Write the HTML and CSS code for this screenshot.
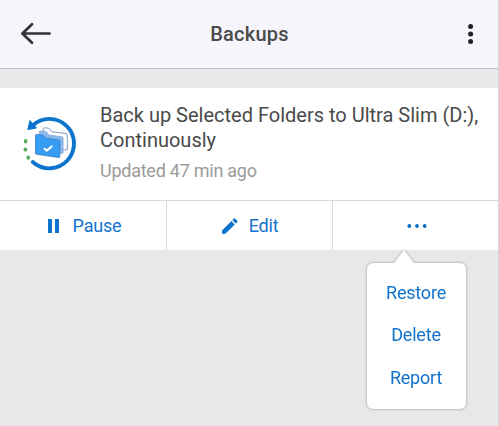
FILE: index.html
```html
<!DOCTYPE html>
<html lang="en">
<head>
  <meta charset="UTF-8" />
  <meta name="viewport" content="width=device-width, initial-scale=1.0" />
  <title>Backups</title>
  <link rel="stylesheet" href="styles.css">
</head>
<body>
  <div class="app">
    <header class="header">
      <button class="icon-btn" aria-label="Back">
        <svg width="32" height="24" viewBox="0 0 32 24" fill="none" stroke="#343236" stroke-width="2.7" stroke-linecap="round" stroke-linejoin="round">
          <path d="M29.5 11.5H2.5M12 2.3L2.4 11.5l9.6 9.2" />
        </svg>
      </button>
      <h1 class="title">Backups</h1>
      <button class="icon-btn" aria-label="Menu">
        <svg width="6" height="22" viewBox="0 0 6 22" fill="#222126">
          <circle cx="2.6" cy="3.5" r="2.5" />
          <circle cx="2.6" cy="11" r="2.5" />
          <circle cx="2.6" cy="18.5" r="2.5" />
        </svg>
      </button>
    </header>

    <main class="card">
      <div class="info">
        <svg class="backup-icon" width="60" height="60" viewBox="0 0 60 60" fill="none">
          <path d="M12.8 49A24.7 24.7 0 1 0 12 13" stroke="#0c74cd" stroke-width="3.9" stroke-linecap="round" />
          <path d="M9.9 7.6L7.8 16.6l8.6-1.6z" fill="#0c74cd" stroke="#0c74cd" stroke-linejoin="round" />
          <g fill="#55ad58">
            <ellipse cx="5.6" cy="28.2" rx="1.8" ry="2.2" />
            <ellipse cx="5.4" cy="36.6" rx="1.9" ry="2.1" />
            <ellipse cx="8.3" cy="44.7" rx="1.9" ry="2.1" />
          </g>
          <path d="M23.2 15.8q0-1.2 1.2-1l4 .4q1 .1 1.6 1l1.8 2.5 14.6 1.9q.9.1.9 1v14.6q0 1-1 .9l-23.1-3z" fill="#fff" stroke="#6180ad" stroke-width=".8" />
          <path d="M19.3 19q0-1.1 1.1-1l5 .5q1 .1 1.5.9l2 2.5 13.2 1.8q1 .1 1 1.1v14.7q0 1-1 .9l-22.8-3z" fill="#8abaea" stroke="#5f92cf" stroke-width=".5" />
          <path d="M15.5 22.4q0-1 1-.9l5.7.5q.9.1 1.4.8l2 2.4 13.2 1.7q1 .1 1 1.1v15.8q0 1-1 .8l-22.3-3.3q-1-.1-1-1z" fill="#369cf4" stroke="#2a72bd" stroke-width=".7" />
          <path d="M24 35.2l2.9 2.4 5.3-4.7" stroke="#fff" stroke-width="2" />
        </svg>
        <div class="text">
          <h2 class="name">Back up Selected Folders to Ultra Slim (D:), Continuously</h2>
          <p class="updated">Updated 47 min ago</p>
        </div>
      </div>

      <div class="actions">
        <button class="action pause">
          <svg width="11" height="14" viewBox="0 0 11 14" fill="#0a73cc">
            <path d="M0 0h4v14H0zM7 0h4v14H7z" />
          </svg>
          <span class="pause-label">Pause</span>
        </button>
        <button class="action edit">
          <svg width="16" height="16" viewBox="0 0 16 16" fill="#0a73cc">
            <path d="M0 12.4L9.4 3l3.4 3.4L3.4 15.7H0zM10.3 2.1L12 .5q.5-.5 1 0l2.4 2.4q.5.5 0 1l-1.7 1.6z" />
          </svg>
          <span class="edit-label">Edit</span>
        </button>
        <div class="action more">
          <button class="more-btn" aria-label="More">
            <svg width="20" height="4" viewBox="0 0 20 4" fill="#0a6fc2">
              <circle cx="2.3" cy="2" r="1.9" />
              <circle cx="10" cy="2" r="1.9" />
              <circle cx="17.7" cy="2" r="1.9" />
            </svg>
          </button>
          <div class="menu">
            <svg class="menu-arrow" width="20" height="14" viewBox="0 0 20 14">
              <path d="M0 13L10 0l10 13v1H0z" fill="#fff" />
            </svg>
            <a class="menu-item">Restore</a>
            <a class="menu-item">Delete</a>
            <a class="menu-item">Report</a>
          </div>
        </div>
      </div>
    </main>
  </div>
</body>
</html>
```

FILE: styles.css
```css
* {
  box-sizing: border-box;
}
body {
  margin: 0;
  font-family: Roboto, "Liberation Sans", sans-serif;
  background-color: #e8e8e8;
  color: #4a4a4a;
}
button {
  padding: 0;
  border: none;
  background: none;
  font: inherit;
  color: inherit;
  cursor: pointer;
}
svg {
  display: block;
  flex: none;
}
h1, h2, p {
  margin: 0;
}
.app {
  height: 426px;
  overflow: hidden;
  border-right: 1px solid #d5d5d7;
}
.header {
  display: grid;
  grid-template-columns: 32px 1fr 32px;
  align-items: center;
  height: 69px;
  padding: 0 11px 1px 20px;
  border-bottom: 1px solid #c2c2c6;
  background-color: #f5f5fb;
}
.header .icon-btn:last-child {
  justify-self: center;
}
.title {
  font-size: 20px;
  font-weight: 500;
  line-height: 24px;
  letter-spacing: 0.25px;
  text-align: center;
  padding-right: 8px;
}
.card {
  margin-top: 19px;
  background-color: #fff;
}
.info {
  display: flex;
  gap: 20px;
  height: 112px;
  padding: 15px 10px 0 20px;
}
.backup-icon {
  margin-top: 10px;
}
.name {
  font-size: 20px;
  font-weight: 400;
  line-height: 25px;
}
.updated {
  margin-top: 6px;
  font-size: 18px;
  line-height: 24px;
  letter-spacing: -0.25px;
  color: #9b9b9b;
}
.actions {
  display: grid;
  grid-template-columns: 167px 166px 1fr;
  height: 50px;
  border-top: 1px solid #d9d9d9;
}
.action {
  display: flex;
  align-items: center;
  justify-content: center;
  border-right: 1px solid #d9d9d9;
  font-size: 18px;
  letter-spacing: -0.2px;
  color: #1373cc;
}
.pause {
  padding-left: 3px;
}
.pause-label {
  margin-left: 14px;
}
.edit {
  padding-left: 1px;
}
.edit-label {
  margin-left: 11px;
}
.more {
  position: relative;
  padding-left: 2px;
  border-right: none;
}
.menu {
  position: absolute;
  top: 62px;
  left: 34px;
  display: flex;
  flex-direction: column;
  align-items: center;
  width: 99px;
  height: 146px;
  padding: 9px 1px 0 0;
  border-radius: 6px;
  background-color: #fff;
  filter: drop-shadow(0 0 1.5px rgba(0, 0, 0, 0.35));
}
.menu-arrow {
  position: absolute;
  top: -13px;
  left: 27px;
}
.menu-item {
  line-height: 42.4px;
}
```
